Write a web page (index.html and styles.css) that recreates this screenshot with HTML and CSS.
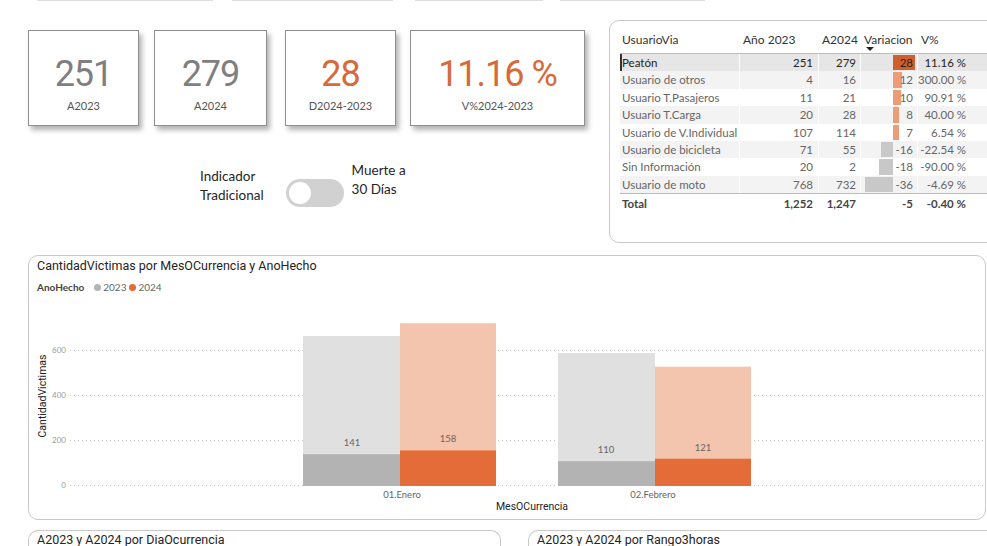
FILE: index.html
```html
<!DOCTYPE html>
<html lang="es">
<head>
  <meta charset="UTF-8">
  <meta name="viewport" content="width=device-width, initial-scale=1.0">
  <title>Victimas por Mes</title>
  <link rel="stylesheet" href="styles.css">
</head>
<body>
<div class="page">

  <!-- bordes de los segmentadores de arriba (cortados) -->
  <div class="strip">
    <span class="s1"></span><span class="s2"></span><span class="s3"></span><span class="s4"></span>
  </div>

  <div class="top">
    <div class="left">
      <div class="kpis">
        <div class="kpi k1">
          <div class="kpi-value">251</div>
          <div class="kpi-label">A2023</div>
        </div>
        <div class="kpi k2">
          <div class="kpi-value">279</div>
          <div class="kpi-label">A2024</div>
        </div>
        <div class="kpi k3">
          <div class="kpi-value orange">28</div>
          <div class="kpi-label">D2024-2023</div>
        </div>
        <div class="kpi k4">
          <div class="kpi-value orange">11.16 %</div>
          <div class="kpi-label">V%2024-2023</div>
        </div>
      </div>

      <div class="switch">
        <div class="sw-left">Indicador<br>Tradicional</div>
        <div class="toggle"><div class="knob"></div></div>
        <div class="sw-right">Muerte a<br>30 Días</div>
      </div>
    </div>

    <!-- Tabla UsuarioVia -->
    <div class="table-card">
      <div class="tr head">
        <div class="c1">UsuarioVia</div>
        <div>Año 2023</div>
        <div>A2024</div>
        <div>Variacion<span class="sort"></span></div>
        <div>V%</div>
      </div>
      <div class="tr row sel">
        <div class="c1">Peatón</div>
        <div class="num">251</div>
        <div class="num">279</div>
        <div class="num var"><span class="bar dark" style="left:32px;width:21.8px"></span><span class="v">28</span></div>
        <div class="num">11.16 %</div>
      </div>
      <div class="tr row alt">
        <div class="c1">Usuario de otros</div>
        <div class="num">4</div>
        <div class="num">16</div>
        <div class="num var"><span class="bar pos" style="left:32px;width:9.4px"></span><span class="v">12</span></div>
        <div class="num">300.00 %</div>
      </div>
      <div class="tr row">
        <div class="c1">Usuario T.Pasajeros</div>
        <div class="num">11</div>
        <div class="num">21</div>
        <div class="num var"><span class="bar pos" style="left:32px;width:7.8px"></span><span class="v">10</span></div>
        <div class="num">90.91 %</div>
      </div>
      <div class="tr row alt">
        <div class="c1">Usuario T.Carga</div>
        <div class="num">20</div>
        <div class="num">28</div>
        <div class="num var"><span class="bar pos" style="left:32px;width:6.2px"></span><span class="v">8</span></div>
        <div class="num">40.00 %</div>
      </div>
      <div class="tr row">
        <div class="c1">Usuario de V.Individual</div>
        <div class="num">107</div>
        <div class="num">114</div>
        <div class="num var"><span class="bar pos" style="left:32px;width:5.5px"></span><span class="v">7</span></div>
        <div class="num">6.54 %</div>
      </div>
      <div class="tr row alt">
        <div class="c1">Usuario de bicicleta</div>
        <div class="num">71</div>
        <div class="num">55</div>
        <div class="num var"><span class="bar neg" style="left:19.5px;width:12.5px"></span><span class="v">-16</span></div>
        <div class="num">-22.54 %</div>
      </div>
      <div class="tr row">
        <div class="c1">Sin Información</div>
        <div class="num">20</div>
        <div class="num">2</div>
        <div class="num var"><span class="bar neg" style="left:18px;width:14px"></span><span class="v">-18</span></div>
        <div class="num">-90.00 %</div>
      </div>
      <div class="tr row alt">
        <div class="c1">Usuario de moto</div>
        <div class="num">768</div>
        <div class="num">732</div>
        <div class="num var"><span class="bar neg" style="left:4px;width:28px"></span><span class="v">-36</span></div>
        <div class="num">-4.69 %</div>
      </div>
      <div class="tr total">
        <div class="c1">Total</div>
        <div class="num">1,252</div>
        <div class="num">1,247</div>
        <div class="num">-5</div>
        <div class="num">-0.40 %</div>
      </div>
    </div>
  </div>

  <!-- Grafico de columnas -->
  <div class="chart-card">
    <div class="chart-title">CantidadVictimas por MesOCurrencia y AnoHecho</div>
    <div class="legend">
      <b>AnoHecho</b>
      <span class="dot gray"></span>2023
      <span class="dot orange"></span>2024
    </div>
    <svg class="plot" width="956" height="226" viewBox="29 293 956 226">
      <g class="grid">
        <line x1="70" x2="985" y1="350.5" y2="350.5"/>
        <line x1="70" x2="985" y1="395.5" y2="395.5"/>
        <line x1="70" x2="985" y1="440.5" y2="440.5"/>
        <line x1="70" x2="985" y1="485.5" y2="485.5"/>
      </g>

      <rect x="303" y="336" width="97" height="150" fill="#e0e0e0"/>
      <rect x="303" y="454.2" width="97" height="31.8" fill="#b3b3b3"/>
      <rect x="400" y="323.3" width="96" height="162.7" fill="#f3c4ae"/>
      <rect x="400" y="450.4" width="96" height="35.6" fill="#e46c39"/>

      <rect x="558" y="353" width="97" height="133" fill="#e0e0e0"/>
      <rect x="558" y="461.2" width="97" height="24.8" fill="#b3b3b3"/>
      <rect x="655" y="366.7" width="96" height="119.3" fill="#f3c4ae"/>
      <rect x="655" y="458.7" width="96" height="27.3" fill="#e46c39"/>

      <g class="ticks">
        <text x="66" y="351">600</text>
        <text x="66" y="396">400</text>
        <text x="66" y="441">200</text>
        <text x="66" y="486">0</text>
      </g>
      <text class="axis-title" transform="translate(43 396) rotate(-90)">CantidadVictimas</text>

      <g class="labels">
        <text x="352" y="444">141</text>
        <text x="448" y="440">158</text>
        <text x="606" y="451">110</text>
        <text x="703" y="449">121</text>
        <text x="402" y="496">01.Enero</text>
        <text x="653" y="496">02.Febrero</text>
      </g>
      <text class="axis-title" x="532" y="507">MesOCurrencia</text>
    </svg>
  </div>

  <div class="bottom">
    <div class="mini b1"><div class="mini-title">A2023 y A2024 por DiaOcurrencia</div></div>
    <div class="mini b2"><div class="mini-title">A2023 y A2024 por Rango3horas</div></div>
  </div>

</div>
</body>
</html>
```

FILE: styles.css
```css
/* Tablero de victimas */
body {
  margin: 0;
  background: #fff;
  font-family: Lato, "Noto Sans", sans-serif;
  color: #252423;
  overflow: hidden;
}
.page {
  width: 987px;
  height: 546px;
  overflow: hidden;
}

/* lineas de arriba */
.strip {
  display: flex;
  height: 20px;
}
.strip span {
  height: 1px;
  background: #dedede;
}
.s1 { margin-left: 37px; width: 176px; }
.s2 { margin-left: 19px; width: 161px; }
.s3 { margin-left: 22px; width: 128px; }
.s4 { margin-left: 17px; width: 145px; }

.top {
  display: flex;
  align-items: flex-start;
}
.left {
  flex: none;
  width: 609px;
  padding-left: 28px;
  box-sizing: border-box;
}

/* tarjetas KPI */
.kpis {
  display: flex;
  margin-top: 10px;
}
.kpi {
  flex: none;
  height: 96px;
  box-sizing: border-box;
  border: 1px solid #8f8f8f;
  box-shadow: 3px 4px 5px rgba(0, 0, 0, 0.3);
  background: #fff;
  text-align: center;
  padding-top: 25px;
}
.k1 { width: 111px; }
.k2 { width: 113px; margin-left: 15px; }
.k3 { width: 111px; margin-left: 18px; }
.k4 { width: 175px; margin-left: 14px; }
.kpi-value {
  font-family: Roboto, sans-serif;
  font-size: 36px;
  line-height: 36px;
  letter-spacing: -1px;
  color: #7f7f7f;
}
.kpi-value.orange {
  color: #d7693a;
}
.kpi-label {
  margin-top: 7px;
  font-size: 11px;
  line-height: 14px;
  color: #555;
}

/* interruptor */
.switch {
  display: flex;
  align-items: flex-start;
  margin-left: 172px;
  margin-top: 35px;
  font-size: 13.5px;
  line-height: 19px;
  color: #252423;
}
.sw-left {
  margin-top: 6px;
}
.toggle {
  display: flex;
  align-items: center;
  width: 58px;
  height: 28px;
  margin-left: 22px;
  margin-top: 18px;
  padding-left: 3px;
  box-sizing: border-box;
  border-radius: 14px;
  background: #d1d1d1;
}
.knob {
  width: 22px;
  height: 22px;
  border-radius: 50%;
  background: #fff;
}
.sw-right {
  margin-left: 8px;
}

/* tabla */
.table-card {
  flex: none;
  width: 400px;
  height: 223px;
  box-sizing: border-box;
  border: 1px solid #c8c8c8;
  border-radius: 10px;
  padding: 8px 0 0 10px;
}
.tr {
  display: grid;
  grid-template-columns: 119px 79px 42px 57px 53px;
  font-size: 11.5px;
  color: #666;
}
.tr > div {
  padding-left: 4px;
  white-space: nowrap;
}
.tr > .c1 {
  padding-left: 2px;
}
.head {
  height: 25px;
  box-sizing: border-box;
  border-bottom: 1px solid #9fc3e7;
  font-size: 12px;
  color: #333;
}
.head > div {
  padding-top: 4px;
  line-height: 14px;
}
.sort {
  display: block;
  width: 0;
  height: 0;
  margin-left: 2px;
  border-left: 4px solid transparent;
  border-right: 4px solid transparent;
  border-top: 4px solid #222;
}
.row {
  height: 17.4px;
  line-height: 17.4px;
}
.row > div + div {
  border-left: 1px solid #fff;
}
.row.alt {
  background: #f3f3f3;
}
.row.sel {
  background: #e6e6e6;
  color: #252423;
}
.row.sel > .c1 {
  padding-left: 0;
  border-left: 2px solid #333;
}
.tr > .num {
  text-align: right;
  padding-left: 0;
  padding-right: 4px;
}
.tr > .num:nth-child(2) {
  padding-right: 5px;
}
.var {
  position: relative;
}
.var .v {
  position: relative;
}
.bar {
  position: absolute;
  top: 1px;
  bottom: 1px;
}
.bar.dark { background: #cf5f2c; }
.bar.pos { background: #ec9d78; }
.bar.neg { background: #c8c8c8; }
.total {
  height: 19px;
  line-height: 19px;
  border-top: 1px solid #9fc3e7;
  font-weight: bold;
  color: #444;
}

/* grafico */
.chart-card {
  width: 958px;
  height: 265px;
  margin-left: 28px;
  margin-top: 12px;
  box-sizing: border-box;
  border: 1px solid #c8c8c8;
  border-radius: 10px;
}
.chart-title {
  padding: 1px 0 0 8px;
  font-family: Roboto, sans-serif;
  font-size: 12.5px;
  line-height: 18px;
  color: #252423;
}
.legend {
  display: flex;
  align-items: center;
  height: 12px;
  margin-top: 6px;
  padding-left: 8px;
  font-size: 10px;
  color: #666;
}
.legend b {
  color: #444;
  margin-right: 7px;
}
.dot {
  width: 7px;
  height: 7px;
  border-radius: 50%;
  margin: 0 2px 0 3px;
}
.dot.gray { background: #b3b3b3; }
.dot.orange { background: #e66c37; }
.plot {
  display: block;
}
.grid line {
  stroke: #c8c8c8;
  stroke-width: 1;
  stroke-dasharray: 1 3;
}
.plot text {
  font-family: Lato, sans-serif;
  dominant-baseline: middle;
}
.ticks text {
  font-size: 8px;
  fill: #999;
  text-anchor: end;
}
.labels text {
  font-size: 9.5px;
  fill: #666;
  text-anchor: middle;
}
.plot .axis-title {
  font-family: Roboto, sans-serif;
  font-size: 10.5px;
  fill: #252423;
  text-anchor: middle;
}

/* tarjetas de abajo */
.bottom {
  display: flex;
  margin-top: 10px;
  padding-left: 28px;
}
.mini {
  flex: none;
  height: 30px;
  box-sizing: border-box;
  border: 1px solid #c8c8c8;
  border-bottom: none;
  border-radius: 10px 10px 0 0;
}
.b1 { width: 473px; }
.b2 { width: 470px; margin-left: 27px; }
.mini-title {
  padding-left: 8px;
  font-family: Roboto, sans-serif;
  font-size: 12.5px;
  line-height: 18px;
  color: #252423;
}
```
